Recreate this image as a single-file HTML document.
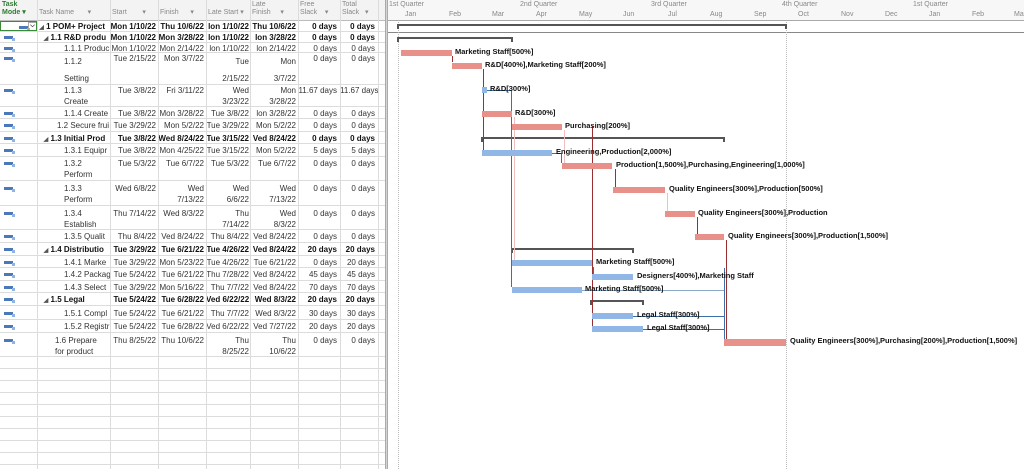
<!DOCTYPE html>
<html><head><meta charset="utf-8">
<style>
*{margin:0;padding:0;box-sizing:border-box}
body{width:1024px;height:469px;overflow:hidden;background:#fff;font-family:"Liberation Sans",sans-serif;font-size:8px;color:#333;position:relative}
.a{position:absolute}
.hd{position:absolute;top:0;height:21px;background:#f3f3f3;border-bottom:1px solid #bbb;color:#888;font-size:7px;line-height:8px;padding:1px 2px}
.vl{position:absolute;top:0;height:469px;width:1px;background:#dcdcdc}
.r{position:absolute;left:0;width:385px;border-bottom:1px solid #dcdcdc}
.r>div{position:absolute;top:0;padding-top:var(--p);line-height:11px;white-space:nowrap;overflow:hidden;height:100%}
.b>div{font-weight:bold;color:#111}
.m{left:0;width:37px}
.m i{position:absolute;left:4px;width:9px;height:3px;background:#4a78b8;top:calc(var(--p) + 4px)}
.m i:after{content:"";position:absolute;left:8px;top:2px;width:3px;height:3px;background:#8fb4e3}
.n{left:37px;width:73px}
.s{left:110px;width:48px;text-align:right;padding-right:2px}
.f{left:158px;width:48px;text-align:right;padding-right:2px}
.ls{left:206px;width:44px;text-align:right;padding-right:1px}
.lf{left:250px;width:48px;text-align:right;padding-right:2px}
.fs{left:298px;width:42px;text-align:right;padding-right:3px}
.ts{left:340px;width:38px;text-align:right;padding-right:3px}
.tri{font-size:6px;color:#555}
.bar{position:absolute;height:6px}
.pk{background:#e8918b}
.bl{background:#91b7e6}
.lb{position:absolute;font-size:7.5px;font-weight:bold;color:#111;line-height:8px;white-space:nowrap}
.br{position:absolute;height:2px;background:#555}
.br:before,.br:after{content:"";position:absolute;top:0;width:2px;height:5px;background:#555}
.br:before{left:0}.br:after{right:0}
.ln{position:absolute;width:1px}
.red{background:#9b2f2f}.blu{background:#3d6fa8}.lp{background:#efc0bd}
.h{position:absolute;height:1px}
</style></head><body>

<div class="hd" style="left:0;width:37px;color:#2e7d32;font-weight:bold">Task<br>Mode ▾</div>
<div class="hd" style="left:37px;width:73px;padding-top:9px">Task Name&nbsp;&nbsp;&nbsp;&nbsp;&nbsp;&nbsp;&nbsp;▾</div>
<div class="hd" style="left:110px;width:48px;padding-top:9px">Start&nbsp;&nbsp;&nbsp;&nbsp;&nbsp;&nbsp;&nbsp;&nbsp;▾</div>
<div class="hd" style="left:158px;width:48px;padding-top:9px">Finish&nbsp;&nbsp;&nbsp;&nbsp;&nbsp;&nbsp;▾</div>
<div class="hd" style="left:206px;width:44px;padding-top:9px">Late Start ▾</div>
<div class="hd" style="left:250px;width:48px">Late<br>Finish&nbsp;&nbsp;&nbsp;&nbsp;&nbsp;▾</div>
<div class="hd" style="left:298px;width:42px">Free<br>Slack&nbsp;&nbsp;&nbsp;&nbsp;▾</div>
<div class="hd" style="left:340px;width:38px">Total<br>Slack&nbsp;&nbsp;&nbsp;▾</div>
<div class="hd" style="left:378px;width:7px"></div>

<div class="r b" style="top:21px;height:11px;--p:0px"><div class="m" style="border:1px solid #3a8a3a;background:#fff"><i style="left:18px;top:4px"></i><span style="position:absolute;left:27px;top:0;width:9px;height:9px;border:1px solid #aaa;font-size:6px;line-height:7px;text-align:center">⌵</span></div><div class="n">&nbsp;<span class="tri">◢</span> 1 POM+ Project</div><div class="s">Mon 1/10/22</div><div class="f">Thu 10/6/22</div><div class="ls">lon 1/10/22</div><div class="lf">Thu 10/6/22</div><div class="fs">0 days</div><div class="ts">0 days</div></div>
<div class="r b" style="top:32px;height:11px;--p:0px"><div class="m"><i></i></div><div class="n">&nbsp;&nbsp;&nbsp;<span class="tri">◢</span> 1.1 R&amp;D produ</div><div class="s">Mon 1/10/22</div><div class="f">Mon 3/28/22</div><div class="ls">lon 1/10/22</div><div class="lf">lon 3/28/22</div><div class="fs">0 days</div><div class="ts">0 days</div></div>
<div class="r" style="top:43px;height:10px;--p:0px"><div class="m"><i></i></div><div class="n" style="padding-left:27px">1.1.1 Produc</div><div class="s">Mon 1/10/22</div><div class="f">Mon 2/14/22</div><div class="ls">lon 1/10/22</div><div class="lf">lon 2/14/22</div><div class="fs">0 days</div><div class="ts">0 days</div></div>
<div class="r" style="top:53px;height:32px;--p:0px"><div class="m"><i></i></div><div class="n" style="padding-left:27px;line-height:17px">1.1.2<br>Setting</div><div class="s">Tue 2/15/22</div><div class="f">Mon 3/7/22</div><div class="ls" style="line-height:17px">Tue<br>2/15/22</div><div class="lf" style="line-height:17px">Mon<br>3/7/22</div><div class="fs">0 days</div><div class="ts">0 days</div></div>
<div class="r" style="top:85px;height:22px;--p:0px"><div class="m"><i></i></div><div class="n" style="padding-left:27px">1.1.3<br>Create</div><div class="s">Tue 3/8/22</div><div class="f">Fri 3/11/22</div><div class="ls">Wed<br>3/23/22</div><div class="lf">Mon<br>3/28/22</div><div class="fs">11.67 days</div><div class="ts">11.67 days</div></div>
<div class="r" style="top:107px;height:12px;--p:1px"><div class="m"><i></i></div><div class="n" style="padding-left:27px">1.1.4 Create</div><div class="s">Tue 3/8/22</div><div class="f">Mon 3/28/22</div><div class="ls">Tue 3/8/22</div><div class="lf">lon 3/28/22</div><div class="fs">0 days</div><div class="ts">0 days</div></div>
<div class="r" style="top:119px;height:13px;--p:1px"><div class="m"><i></i></div><div class="n" style="padding-left:20px">1.2 Secure frui</div><div class="s">Tue 3/29/22</div><div class="f">Mon 5/2/22</div><div class="ls">Tue 3/29/22</div><div class="lf">Mon 5/2/22</div><div class="fs">0 days</div><div class="ts">0 days</div></div>
<div class="r b" style="top:132px;height:12px;--p:1px"><div class="m"><i></i></div><div class="n">&nbsp;&nbsp;&nbsp;<span class="tri">◢</span> 1.3 Initial Prod</div><div class="s">Tue 3/8/22</div><div class="f">Wed 8/24/22</div><div class="ls">Tue 3/15/22</div><div class="lf">Ved 8/24/22</div><div class="fs">0 days</div><div class="ts">0 days</div></div>
<div class="r" style="top:144px;height:13px;--p:1px"><div class="m"><i></i></div><div class="n" style="padding-left:27px">1.3.1 Equipr</div><div class="s">Tue 3/8/22</div><div class="f">Mon 4/25/22</div><div class="ls">Tue 3/15/22</div><div class="lf">Mon 5/2/22</div><div class="fs">5 days</div><div class="ts">5 days</div></div>
<div class="r" style="top:157px;height:24px;--p:1px"><div class="m"><i></i></div><div class="n" style="padding-left:27px">1.3.2<br>Perform</div><div class="s">Tue 5/3/22</div><div class="f">Tue 6/7/22</div><div class="ls">Tue 5/3/22</div><div class="lf">Tue 6/7/22</div><div class="fs">0 days</div><div class="ts">0 days</div></div>
<div class="r" style="top:181px;height:25px;--p:2px"><div class="m"><i></i></div><div class="n" style="padding-left:27px">1.3.3<br>Perform</div><div class="s">Wed 6/8/22</div><div class="f">Wed<br>7/13/22</div><div class="ls">Wed<br>6/6/22</div><div class="lf">Wed<br>7/13/22</div><div class="fs">0 days</div><div class="ts">0 days</div></div>
<div class="r" style="top:206px;height:24px;--p:2px"><div class="m"><i></i></div><div class="n" style="padding-left:27px">1.3.4<br>Establish</div><div class="s">Thu 7/14/22</div><div class="f">Wed 8/3/22</div><div class="ls">Thu<br>7/14/22</div><div class="lf">Wed<br>8/3/22</div><div class="fs">0 days</div><div class="ts">0 days</div></div>
<div class="r" style="top:230px;height:13px;--p:1px"><div class="m"><i></i></div><div class="n" style="padding-left:27px">1.3.5 Qualit</div><div class="s">Thu 8/4/22</div><div class="f">Ved 8/24/22</div><div class="ls">Thu 8/4/22</div><div class="lf">Ved 8/24/22</div><div class="fs">0 days</div><div class="ts">0 days</div></div>
<div class="r b" style="top:243px;height:13px;--p:1px"><div class="m"><i></i></div><div class="n">&nbsp;&nbsp;&nbsp;<span class="tri">◢</span> 1.4 Distributio</div><div class="s">Tue 3/29/22</div><div class="f">Tue 6/21/22</div><div class="ls">Tue 4/26/22</div><div class="lf">Ved 8/24/22</div><div class="fs">20 days</div><div class="ts">20 days</div></div>
<div class="r" style="top:256px;height:12px;--p:1px"><div class="m"><i></i></div><div class="n" style="padding-left:27px">1.4.1 Marke</div><div class="s">Tue 3/29/22</div><div class="f">Mon 5/23/22</div><div class="ls">Tue 4/26/22</div><div class="lf">Tue 6/21/22</div><div class="fs">0 days</div><div class="ts">20 days</div></div>
<div class="r" style="top:268px;height:13px;--p:1px"><div class="m"><i></i></div><div class="n" style="padding-left:27px">1.4.2 Packag</div><div class="s">Tue 5/24/22</div><div class="f">Tue 6/21/22</div><div class="ls">Thu 7/28/22</div><div class="lf">Ved 8/24/22</div><div class="fs">45 days</div><div class="ts">45 days</div></div>
<div class="r" style="top:281px;height:12px;--p:1px"><div class="m"><i></i></div><div class="n" style="padding-left:27px">1.4.3 Select</div><div class="s">Tue 3/29/22</div><div class="f">Mon 5/16/22</div><div class="ls">Thu 7/7/22</div><div class="lf">Ved 8/24/22</div><div class="fs">70 days</div><div class="ts">70 days</div></div>
<div class="r b" style="top:293px;height:13px;--p:1px"><div class="m"><i></i></div><div class="n">&nbsp;&nbsp;&nbsp;<span class="tri">◢</span> 1.5 Legal</div><div class="s">Tue 5/24/22</div><div class="f">Tue 6/28/22</div><div class="ls">Ved 6/22/22</div><div class="lf">Wed 8/3/22</div><div class="fs">20 days</div><div class="ts">20 days</div></div>
<div class="r" style="top:306px;height:14px;--p:2px"><div class="m"><i></i></div><div class="n" style="padding-left:27px">1.5.1 Compl</div><div class="s">Tue 5/24/22</div><div class="f">Tue 6/21/22</div><div class="ls">Thu 7/7/22</div><div class="lf">Wed 8/3/22</div><div class="fs">30 days</div><div class="ts">30 days</div></div>
<div class="r" style="top:320px;height:13px;--p:1px"><div class="m"><i></i></div><div class="n" style="padding-left:27px">1.5.2 Registr</div><div class="s">Tue 5/24/22</div><div class="f">Tue 6/28/22</div><div class="ls">Ved 6/22/22</div><div class="lf">Ved 7/27/22</div><div class="fs">20 days</div><div class="ts">20 days</div></div>
<div class="r" style="top:333px;height:24px;--p:2px"><div class="m"><i></i></div><div class="n" style="padding-left:18px">1.6 Prepare<br>for product</div><div class="s">Thu 8/25/22</div><div class="f">Thu 10/6/22</div><div class="ls">Thu<br>8/25/22</div><div class="lf">Thu<br>10/6/22</div><div class="fs">0 days</div><div class="ts">0 days</div></div>
<div class="r" style="top:357px;height:12px"></div>
<div class="r" style="top:369px;height:12px"></div>
<div class="r" style="top:381px;height:12px"></div>
<div class="r" style="top:393px;height:12px"></div>
<div class="r" style="top:405px;height:12px"></div>
<div class="r" style="top:417px;height:12px"></div>
<div class="r" style="top:429px;height:12px"></div>
<div class="r" style="top:441px;height:12px"></div>
<div class="r" style="top:453px;height:12px"></div>

<div class="vl" style="left:37px"></div><div class="vl" style="left:110px"></div><div class="vl" style="left:158px"></div><div class="vl" style="left:206px"></div><div class="vl" style="left:250px"></div><div class="vl" style="left:298px"></div><div class="vl" style="left:340px"></div><div class="vl" style="left:378px"></div>
<div class="a" style="left:385px;top:0;width:3px;height:469px;background:#d4d4d4;border-left:1px solid #aaa;border-right:1px solid #aaa"></div>

<div class="a" style="left:388px;top:0;width:636px;height:21px;background:#f7f7f7;border-bottom:1px solid #aaa;color:#888;font-size:7px;line-height:10px">
<span class="a" style="left:1px;top:0">1st Quarter</span><span class="a" style="left:132px;top:0">2nd Quarter</span><span class="a" style="left:263px;top:0">3rd Quarter</span><span class="a" style="left:394px;top:0">4th Quarter</span><span class="a" style="left:525px;top:0">1st Quarter</span>
<span class="a" style="left:17px;top:10px">Jan</span><span class="a" style="left:61px;top:10px">Feb</span><span class="a" style="left:104px;top:10px">Mar</span><span class="a" style="left:148px;top:10px">Apr</span><span class="a" style="left:191px;top:10px">May</span><span class="a" style="left:235px;top:10px">Jun</span><span class="a" style="left:280px;top:10px">Jul</span><span class="a" style="left:322px;top:10px">Aug</span><span class="a" style="left:366px;top:10px">Sep</span><span class="a" style="left:410px;top:10px">Oct</span><span class="a" style="left:453px;top:10px">Nov</span><span class="a" style="left:497px;top:10px">Dec</span><span class="a" style="left:541px;top:10px">Jan</span><span class="a" style="left:584px;top:10px">Feb</span><span class="a" style="left:626px;top:10px">Mar</span>
</div>
<div class="a" style="left:388px;top:32px;width:636px;height:1px;background:#888"></div>

<div class="a" style="left:398px;top:22px;height:447px;border-left:1px dotted #bbb"></div>
<div class="a" style="left:786px;top:22px;height:447px;border-left:1px dotted #bbb"></div>

<div class="br" style="left:397px;top:24px;width:390px"></div>
<div class="br" style="left:397px;top:37px;width:116px"></div>
<div class="br" style="left:481px;top:137px;width:244px"></div>
<div class="br" style="left:511px;top:248px;width:123px"></div>
<div class="br" style="left:590px;top:300px;width:54px"></div>

<div class="ln red" style="left:452px;top:56px;height:6px"></div>
<div class="ln red" style="left:483px;top:69px;height:81px"></div>
<div class="h blu" style="left:487px;top:90px;width:25px"></div>
<div class="ln blu" style="left:511px;top:90px;height:197px"></div>
<div class="ln lp" style="left:514px;top:117px;height:144px"></div>
<div class="ln red" style="left:592px;top:126px;height:200px"></div>
<div class="ln lp" style="left:564px;top:130px;height:33px"></div>
<div class="h blu" style="left:552px;top:153px;width:9px"></div>
<div class="ln blu" style="left:561px;top:153px;height:10px"></div>
<div class="ln red" style="left:615px;top:169px;height:18px"></div>
<div class="ln lp" style="left:667px;top:193px;height:18px"></div>
<div class="ln red" style="left:697px;top:217px;height:17px"></div>
<div class="ln red" style="left:726px;top:240px;height:99px"></div>
<div class="h blu" style="left:582px;top:290px;width:142px;opacity:.6"></div>
<div class="h blu" style="left:633px;top:316px;width:91px"></div>
<div class="h blu" style="left:643px;top:329px;width:81px"></div>
<div class="ln blu" style="left:724px;top:268px;height:71px"></div>
<div class="ln blu" style="left:593px;top:267px;height:7px"></div>

<div class="bar pk" style="left:401px;top:50px;width:51px"></div><div class="lb" style="left:455px;top:48px">Marketing Staff[500%]</div>
<div class="bar pk" style="left:452px;top:63px;width:30px"></div><div class="lb" style="left:485px;top:61px">R&amp;D[400%],Marketing Staff[200%]</div>
<div class="bar bl" style="left:482px;top:87px;width:5px"></div><div class="lb" style="left:490px;top:85px">R&amp;D[300%]</div>
<div class="bar pk" style="left:482px;top:111px;width:30px"></div><div class="lb" style="left:515px;top:109px">R&amp;D[300%]</div>
<div class="bar pk" style="left:512px;top:124px;width:50px"></div><div class="lb" style="left:565px;top:122px">Purchasing[200%]</div>
<div class="bar bl" style="left:482px;top:150px;width:70px"></div><div class="lb" style="left:556px;top:148px">Engineering,Production[2,000%]</div>
<div class="bar pk" style="left:562px;top:163px;width:50px"></div><div class="lb" style="left:616px;top:161px">Production[1,500%],Purchasing,Engineering[1,000%]</div>
<div class="bar pk" style="left:613px;top:187px;width:52px"></div><div class="lb" style="left:669px;top:185px">Quality Engineers[300%],Production[500%]</div>
<div class="bar pk" style="left:665px;top:211px;width:30px"></div><div class="lb" style="left:698px;top:209px">Quality Engineers[300%],Production</div>
<div class="bar pk" style="left:695px;top:234px;width:29px"></div><div class="lb" style="left:728px;top:232px">Quality Engineers[300%],Production[1,500%]</div>
<div class="bar bl" style="left:512px;top:260px;width:80px"></div><div class="lb" style="left:596px;top:258px">Marketing Staff[500%]</div>
<div class="bar bl" style="left:592px;top:274px;width:41px"></div><div class="lb" style="left:637px;top:272px">Designers[400%],Marketing Staff</div>
<div class="bar bl" style="left:512px;top:287px;width:70px"></div><div class="lb" style="left:585px;top:285px">Marketing Staff[500%]</div>
<div class="bar bl" style="left:592px;top:313px;width:41px"></div><div class="lb" style="left:637px;top:311px">Legal Staff[300%]</div>
<div class="bar bl" style="left:592px;top:326px;width:51px"></div><div class="lb" style="left:647px;top:324px">Legal Staff[300%]</div>
<div class="bar pk" style="left:724px;top:339px;width:62px;height:7px"></div><div class="lb" style="left:790px;top:337px">Quality Engineers[300%],Purchasing[200%],Production[1,500%]</div>

</body></html>
